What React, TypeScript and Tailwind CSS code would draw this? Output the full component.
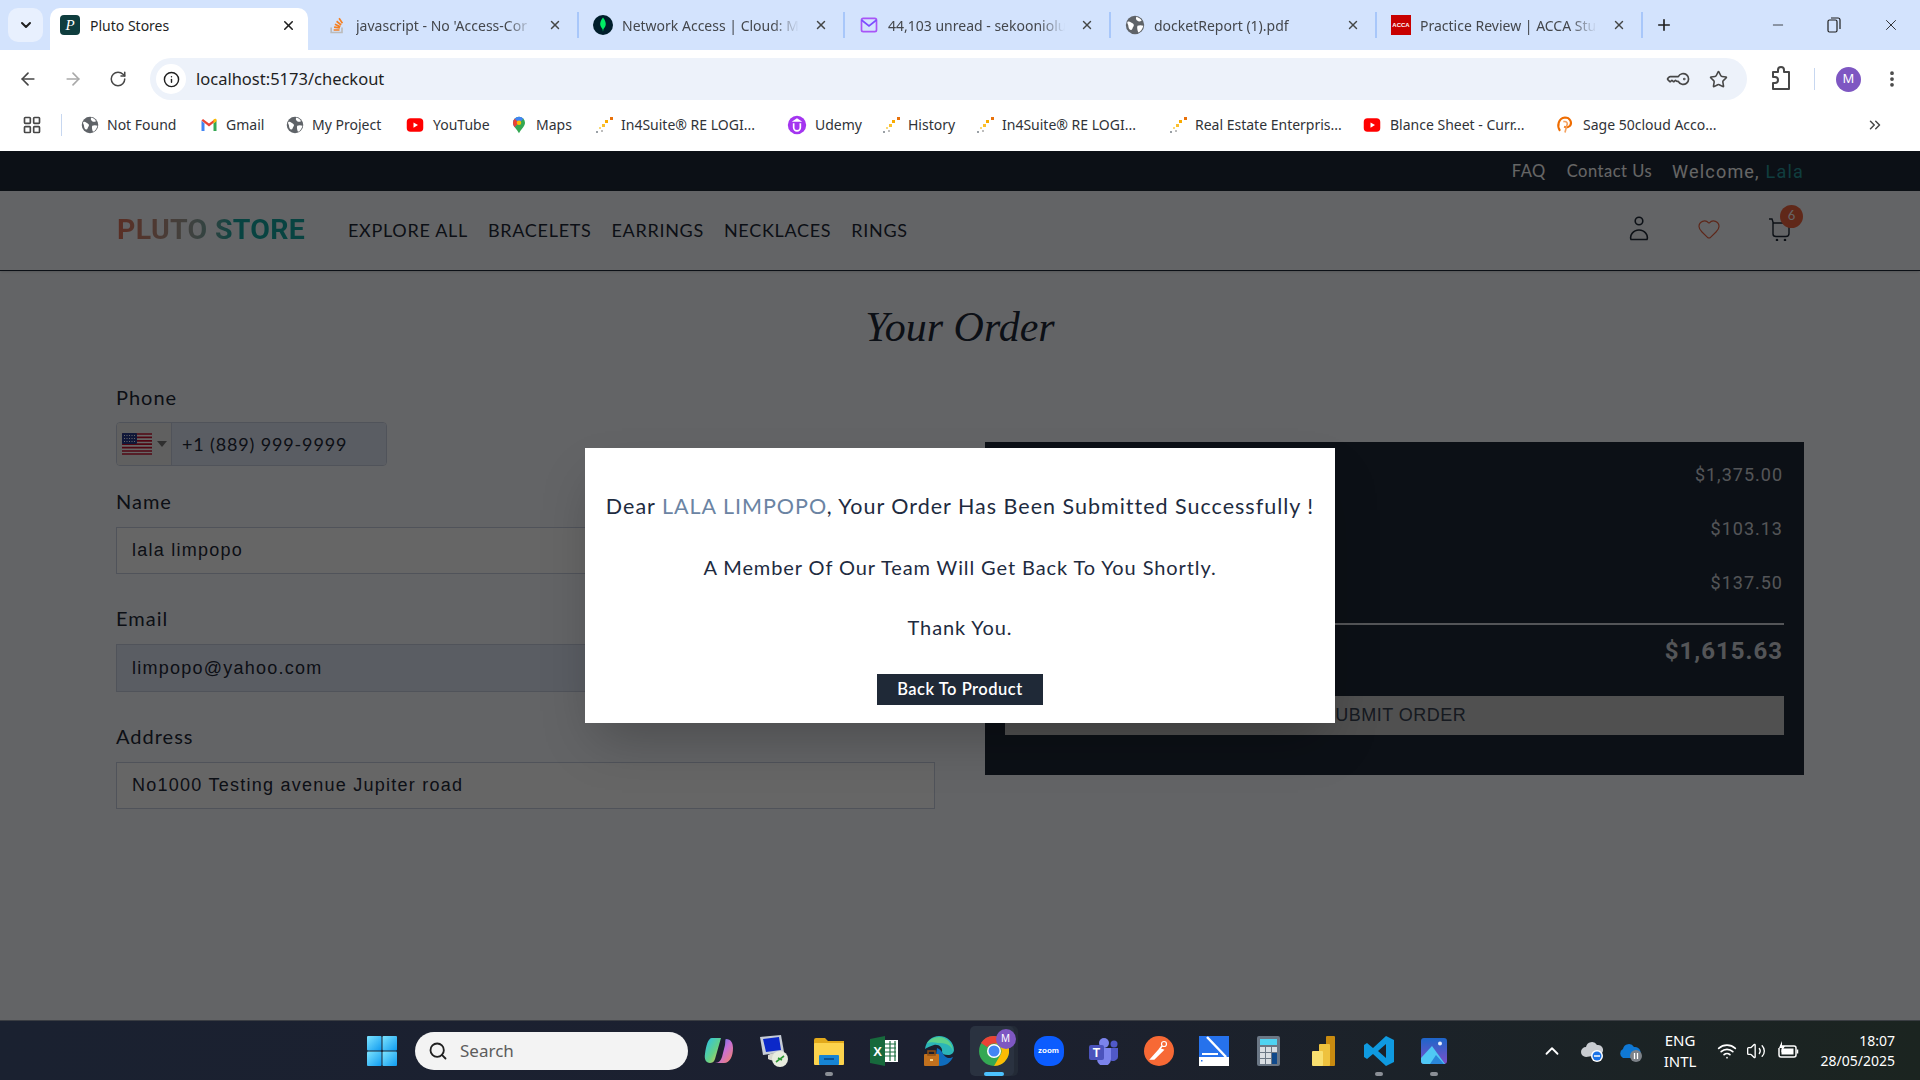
import { ArrowLeft, ArrowRight, RotateCw, Info, KeyRound, Star, EllipsisVertical, X, Plus, Minus, LayoutGrid, ChevronsRight, ChevronDown, Search, ChevronUp, Wifi, Volume2, Heart } from 'lucide-react';
import type { ReactNode } from 'react';

function GlobeIcon({ size = 18 }: { size?: number }) {
  return (
    <svg width={size} height={size} viewBox="0 0 24 24" className="shrink-0">
      <circle cx="12" cy="12" r="11" fill="#5f6368" />
      <path d="M3 8c3-1 4 1 6 2s2 3 1 4-1 4-3 4-3-3-3-5-2-3-1-5zM14 2c2 1 5 2 6 5-2 1-4 1-5 0s-3-3-1-5zM15 13c2-1 5-1 7 0-1 4-3 7-6 8-1-2-2-6-1-8z" fill="#fff" />
    </svg>
  );
}

function GmailIcon() {
  return (
    <svg width="18" height="18" viewBox="0 0 24 24" className="shrink-0">
      <path d="M2 6v14h4V10z" fill="#4285f4" />
      <path d="M22 6v14h-4V10z" fill="#34a853" />
      <path d="M2 6l10 8 10-8-2-2-8 6-8-6z" fill="#ea4335" />
      <path d="M18 4.500V10l4-3V5c0-1.500-2-2-4-.5z" fill="#fbbc04" />
    </svg>
  );
}

function YoutubeIcon() {
  return (
    <svg width="20" height="18" viewBox="0 0 24 24" className="shrink-0">
      <rect x="1" y="3" width="22" height="18" rx="5" fill="#f00" />
      <path d="M10 8.500l6 3.500-6 3.500z" fill="#fff" />
    </svg>
  );
}

function MapsIcon() {
  return (
    <svg width="18" height="20" viewBox="0 0 24 24" className="shrink-0">
      <path d="M12 1a8 8 0 0 1 8 8c0 5-5 8-8 14-3-6-8-9-8-14a8 8 0 0 1 8-8z" fill="#34a853" />
      <path d="M12 1a8 8 0 0 1 6 2.600L6 15c-1-2-2-4-2-6a8 8 0 0 1 8-8z" fill="#4285f4" />
      <path d="M6 3.500L12 9 6 15c-1-2-2-4-2-6s1-4 2-5.500z" fill="#ea4335" />
      <circle cx="12" cy="9" r="3" fill="#fbbc04" />
    </svg>
  );
}

function SparkIcon() {
  return (
    <svg width="18" height="18" viewBox="0 0 18 18" className="shrink-0">
      <rect x="15" y="1" width="3" height="3" fill="#e8710a" />
      <rect x="10" y="4" width="3" height="3" fill="#f9ab00" />
      <rect x="7" y="8" width="3" height="3" fill="#fbc02d" />
      <rect x="4" y="11" width="2" height="2" fill="#f9d976" />
      <rect x="1" y="15" width="2" height="2" fill="#9aa0a6" />
      <rect x="6" y="14" width="2" height="2" fill="#bdbdbd" />
    </svg>
  );
}

function UdemyIcon() {
  return (
    <svg width="20" height="20" viewBox="0 0 24 24" className="shrink-0">
      <circle cx="12" cy="12" r="11" fill="#a435f0" />
      <path d="M8 10v5a4 4 0 0 0 8 0v-5M12 5l-3 2h6z" fill="none" stroke="#fff" strokeWidth="2" />
    </svg>
  );
}

function SageIcon() {
  return (
    <svg width="20" height="22" viewBox="0 0 24 24" className="shrink-0" fill="none">
      <path d="M6 19C2 13 4 4 12 3c6 0 9 6 6 10-2 2-5 2-7 1" stroke="#ef6c00" strokeWidth="2.500" />
      <path d="M10 8c4-1 6 2 4 5l-2 8" stroke="#f4a261" strokeWidth="2" />
    </svg>
  );
}

function PlutoFavicon() {
  return (
    <div className="flex h-5 w-5 shrink-0 items-center justify-center rounded-sm bg-[#0f3d3e] font-['Liberation_Serif',serif] text-[15px] italic text-white">P</div>
  );
}

function StackIcon() {
  return (
    <svg width="20" height="20" viewBox="0 0 24 24" className="shrink-0" fill="none">
      <path d="M5 15v6h13v-6" stroke="#bcbbbb" strokeWidth="2" />
      <path d="M8 18h7M8.500 14.500l7 1M9.500 11l6.500 3M11.500 7.500l5.500 4.500M14.500 4l4 6" stroke="#f48024" strokeWidth="2" />
    </svg>
  );
}

function MongoIcon() {
  return (
    <svg width="20" height="20" viewBox="0 0 24 24" className="shrink-0">
      <circle cx="12" cy="12" r="12" fill="#001e2b" />
      <path d="M12 3c3 4 4 7 3 10-.5 2-2 3-2.500 4l-.5 3-.5-3C11 16 9.500 15 9 13c-1-3 0-6 3-10z" fill="#00ed64" />
    </svg>
  );
}

function MailIcon() {
  return (
    <svg width="20" height="20" viewBox="0 0 24 24" className="shrink-0" fill="none">
      <rect x="3" y="4" width="18" height="16" rx="2" stroke="#a855f7" strokeWidth="2" />
      <path d="M3 6l9 7 9-7" stroke="#7c4dff" strokeWidth="2" />
    </svg>
  );
}

function AccaIcon() {
  return (
    <div className="flex h-5 w-5 shrink-0 items-center justify-center bg-[#c80000] font-['Liberation_Sans',sans-serif] text-[6px] font-bold text-white">ACCA</div>
  );
}

function ExtensionsIcon() {
  return (
    <svg width="22" height="26" viewBox="0 0 22 26" fill="none" stroke="#474747" strokeWidth="2" className="ml-[23px] shrink-0">
      <path d="M3 6h5V4a3 3 0 0 1 6 0v2h5v17H3v-6h2a3 3 0 0 0 0-6H3z" strokeLinejoin="round" />
    </svg>
  );
}

function UsFlag() {
  return (
    <svg width="30" height="22" viewBox="0 0 30 22" className="shrink-0">
      <rect width="30" height="22" rx="2" fill="#fff" />
      <path d="M0 1h30M0 4.400h30M0 7.800h30M0 11.200h30M0 14.600h30M0 18h30M0 21h30" stroke="#c8102e" strokeWidth="1.700" />
      <rect width="15" height="11" rx="1" fill="#2a3a8c" />
      <path d="M2 2.500h11M2 5.500h11M2 8.500h11" stroke="#fff" strokeWidth="1" strokeDasharray="1 1.500" />
    </svg>
  );
}

function WindowsIcon() {
  return (
    <svg width="30" height="30" viewBox="0 0 30 30">
      <defs>
        <linearGradient id="win" x1="0" y1="0" x2="1" y2="1">
          <stop offset="0" stopColor="#7de4ff" />
          <stop offset="1" stopColor="#0f9bf0" />
        </linearGradient>
      </defs>
      <rect width="14.500" height="14.500" rx="1" fill="url(#win)" />
      <rect x="15.500" width="14.500" height="14.500" rx="1" fill="url(#win)" />
      <rect y="15.500" width="14.500" height="14.500" rx="1" fill="url(#win)" />
      <rect x="15.500" y="15.500" width="14.500" height="14.500" rx="1" fill="url(#win)" />
    </svg>
  );
}

function CopilotIcon() {
  return (
    <svg width="30" height="28" viewBox="0 0 30 28">
      <defs>
        <linearGradient id="copL" x1="0" y1="0" x2="1" y2="1">
          <stop offset="0" stopColor="#27c2ee" />
          <stop offset=".55" stopColor="#62d08a" />
          <stop offset="1" stopColor="#f5c842" />
        </linearGradient>
        <linearGradient id="copR" x1="0" y1="0" x2="1" y2="1">
          <stop offset="0" stopColor="#2b7bf0" />
          <stop offset=".5" stopColor="#c66fd9" />
          <stop offset="1" stopColor="#f7845f" />
        </linearGradient>
      </defs>
      <path d="M8 1h9l-6 21c-1 3-3 4-5 4-4 0-6-4-5-9C2 9 4 1 8 1z" fill="url(#copL)" />
      <path d="M22 2c5 0 7 4 7 9 0 8-3 15-9 15h-9c4 0 6-3 7-6l3-12c.5-3 0-6 1-6z" fill="url(#copR)" />
    </svg>
  );
}

function RemoteIcon() {
  return (
    <svg width="30" height="32" viewBox="0 0 30 32">
      <path d="M1 2l21-2 3 17-21 3z" fill="#c6ccd6" />
      <path d="M4 4l16-2 2 13-15 2z" fill="#0b28c9" />
      <path d="M9 20c4-2 10-3 16-2v6c-6 2-12 2-16 0z" fill="#d8d8d0" />
      <circle cx="21" cy="24" r="8" fill="#e8ecdf" />
      <path d="M17 27l4-3-2-1M25 21l-4 3 2 1" stroke="#2e9a35" strokeWidth="1.600" fill="none" />
    </svg>
  );
}

function ExplorerIcon() {
  return (
    <svg width="30" height="28" viewBox="0 0 30 28">
      <path d="M0 3a2 2 0 0 1 2-2h9l3 3h16v6H0z" fill="#e2a91b" />
      <rect y="6" width="30" height="22" rx="1" fill="#fcd34d" />
      <rect x="5" y="18" width="20" height="10" rx="1" fill="#1784d4" />
      <rect x="10" y="21" width="10" height="2" fill="#0b5394" />
    </svg>
  );
}

function ExcelIcon() {
  return (
    <svg width="28" height="30" viewBox="0 0 28 30">
      <rect x="12" y="4" width="16" height="22" fill="#fff" />
      <path d="M15 8h11M15 12h11M15 16h11M15 20h11M20 5v20M25 5v20" stroke="#1d6f42" strokeWidth="1.200" />
      <path d="M0 3L15 0v30L0 27z" fill="#17693c" />
      <text x="7.500" y="20" textAnchor="middle" fontSize="13" fontWeight="700" fill="#fff" fontFamily="Liberation Sans, sans-serif">X</text>
    </svg>
  );
}

function EdgeIcon() {
  return (
    <svg width="30" height="30" viewBox="0 0 30 30">
      <path d="M1 13C2 5 8 0 15 0c8 0 15 6 15 14 0 3-3 5-6 5-4 0-6-1-6-3 1-4-3-8-8-7-4 1-7 3-9 4z" fill="#2bb5b8" />
      <path d="M13 12c6 2 6 9 11 10 2 0 3 0 5-1-2 5-7 9-13 9-2 0-4-1-5-2z" fill="#0f6cbd" />
      <path d="M14 7c6 0 14 1 15 9 0-8-6-15-14-15-5 0-9 2-12 6 3-1 7-1 11 0z" fill="#5cd18c" />
      <rect y="18" width="15" height="12" rx="1" fill="#c2711e" />
      <rect x="4" y="15" width="7" height="4" fill="none" stroke="#8f4f14" strokeWidth="1.500" />
      <rect x="6" y="23" width="3" height="2" fill="#f7d38b" />
    </svg>
  );
}

function ChromeIcon() {
  return (
    <svg width="30" height="30" viewBox="0 0 30 30">
      <circle cx="15" cy="15" r="15" fill="#34a853" />
      <path d="M15 0a15 15 0 0 1 13 7.500H15a7.500 7.500 0 0 0-6.500 3.750L2 7A15 15 0 0 1 15 0z" fill="#ea4335" />
      <path d="M28 7.500A15 15 0 0 1 15 30l6.500-11.250A7.500 7.500 0 0 0 15 7.500z" fill="#fbbc04" />
      <circle cx="15" cy="15" r="7" fill="#fff" />
      <circle cx="15" cy="15" r="5.500" fill="#4285f4" />
    </svg>
  );
}

function ZoomIcon() {
  return (
    <div className="flex h-[30px] w-[30px] items-center justify-center rounded-[13px] bg-[#0b5cff] font-['Liberation_Sans',sans-serif] text-[8px] font-bold text-white">zoom</div>
  );
}

function TeamsIcon() {
  return (
    <svg width="30" height="28" viewBox="0 0 30 28">
      <circle cx="15" cy="6" r="5" fill="#7b83eb" />
      <circle cx="25" cy="7" r="3.500" fill="#5059c9" />
      <path d="M19 11h10v9a5 5 0 0 1-8 3z" fill="#5059c9" />
      <path d="M8 11h14v11a6 6 0 0 1-14 0z" fill="#7b83eb" />
      <rect y="8" width="15" height="15" rx="2" fill="#4b53bc" />
      <text x="7.500" y="20" textAnchor="middle" fontSize="12" fontWeight="700" fill="#fff" fontFamily="Liberation Sans, sans-serif">T</text>
    </svg>
  );
}

function PostmanIcon() {
  return (
    <svg width="30" height="30" viewBox="0 0 30 30">
      <circle cx="15" cy="15" r="15" fill="#f76935" />
      <circle cx="20" cy="8" r="2.500" fill="none" stroke="#fff" strokeWidth="1.200" />
      <path d="M7 23l9-10 3 1-9 9zM18 10l-3 4" stroke="#fff" strokeWidth="1.600" fill="#fff" />
    </svg>
  );
}

function ScannerIcon() {
  return (
    <svg width="30" height="30" viewBox="0 0 30 30">
      <rect width="30" height="30" fill="#2672ec" />
      <path d="M8 1l19 20" stroke="#fff" strokeWidth="2.500" />
      <rect x="3" y="17" width="16" height="2" fill="#fff" />
      <rect y="21" width="30" height="9" fill="#fff" />
      <rect x="2" y="24" width="1.500" height="1.500" fill="#2672ec" />
    </svg>
  );
}

function CalcIcon() {
  return (
    <svg width="23" height="30" viewBox="0 0 23 30">
      <rect width="23" height="30" rx="2" fill="#6b7785" />
      <rect x="3" y="3" width="17" height="6" fill="#4fd3f2" />
      <path d="M3 11h5v5H3zM9 11h5v5H9zM15 11h5v5h-5zM3 17h5v5H3zM9 17h5v5H9zM3 23h5v5H3zM9 23h5v5H9z" fill="#d9dee3" />
      <rect x="15" y="17" width="5" height="11" fill="#114a8b" />
    </svg>
  );
}

function PowerBiIcon() {
  return (
    <svg width="23" height="30" viewBox="0 0 23 30">
      <rect x="14" width="9" height="30" rx="1" fill="#c98b10" />
      <rect x="7" y="8" width="11" height="22" rx="1" fill="#eec23e" />
      <rect y="15" width="11" height="15" rx="1" fill="#f8df6f" />
    </svg>
  );
}

function VscodeIcon() {
  return (
    <svg width="30" height="30" viewBox="0 0 30 30">
      <path d="M22 0l8 4v22l-8 4-13-12-6 5-3-2V9l3-2 6 5zM22 8l-8 7 8 7z" fill="#0f9ae0" fillRule="evenodd" />
    </svg>
  );
}

function PhotosIcon() {
  return (
    <svg width="26" height="26" viewBox="0 0 26 26">
      <defs>
        <linearGradient id="ph" x1="0" y1="0" x2="0" y2="1">
          <stop offset="0" stopColor="#1d66c9" />
          <stop offset="1" stopColor="#7d4fc9" />
        </linearGradient>
      </defs>
      <rect width="26" height="26" rx="3" fill="url(#ph)" />
      <circle cx="19" cy="5.500" r="2" fill="#e8eefc" />
      <path d="M0 20L11 8l13 18H3a3 3 0 0 1-3-3z" fill="#4fc8f5" />
      <path d="M9 26l6-9 8 9z" fill="#2a86d9" />
    </svg>
  );
}

function CloudSyncIcon() {
  return (
    <svg width="24" height="24" viewBox="0 0 24 24">
      <path d="M6 18a5 5 0 0 1 0-10 6 6 0 0 1 11-2 5 5 0 0 1 2 10z" fill="#c9ccd1" />
      <circle cx="17" cy="17" r="6" fill="#fff" />
      <circle cx="17" cy="17" r="4.500" fill="#1a73e8" />
      <path d="M14 17h6" stroke="#fff" strokeWidth="1.500" />
    </svg>
  );
}

function OneDriveIcon() {
  return (
    <svg width="24" height="24" viewBox="0 0 24 24">
      <path d="M4 19a5 5 0 0 1 0-9 6 6 0 0 1 11-2 5 5 0 0 1 2 11z" fill="#0f78d4" />
      <circle cx="17" cy="17" r="6" fill="#7d8288" />
      <path d="M15.500 14v6M18.500 14v6" stroke="#fff" strokeWidth="1.300" />
    </svg>
  );
}

function BatteryIcon() {
  return (
    <svg width="24" height="24" viewBox="0 0 24 24" fill="none">
      <path d="M5 7h14a2 2 0 0 1 2 2v7a2 2 0 0 1-2 2H6a2 2 0 0 1-2-2V9" stroke="#fff" strokeWidth="1.500" />
      <rect x="6.500" y="9.500" width="12" height="6" fill="#fff" />
      <path d="M22.500 10.500v4" stroke="#fff" strokeWidth="1.500" />
      <path d="M7 2L4 9h3l-1 5 4-7H7z" fill="#fff" />
    </svg>
  );
}

function UserIcon() {
  return (
    <svg width="20" height="25" viewBox="0 0 20 25" fill="none" stroke="#1f2937" strokeWidth="1.600">
      <circle cx="10" cy="5" r="3.800" />
      <path d="M2 23.500c-1.500-4 2-9.500 8-9.500s9.500 5.500 8 9.500z" strokeLinejoin="round" />
    </svg>
  );
}

function CartIcon() {
  return (
    <svg width="24" height="24" viewBox="0 0 24 24" fill="none" stroke="#1f2937" strokeWidth="1.400">
      <path d="M1 2h3l1 3v12c0 2 1 2.500 3 2.500h10c2 0 3-1 3-3V6H5" />
      <circle cx="9" cy="23" r=".6" fill="#1f2937" />
      <circle cx="17" cy="23" r=".6" fill="#1f2937" />
    </svg>
  );
}

const tabs: { icon: ReactNode; title: string }[] = [
  { icon: <StackIcon />, title: "javascript - No 'Access-Cor" },
  { icon: <MongoIcon />, title: 'Network Access | Cloud: M' },
  { icon: <MailIcon />, title: '44,103 unread - sekooniolu' },
  { icon: <GlobeIcon size={20} />, title: 'docketReport (1).pdf' },
  { icon: <AccaIcon />, title: 'Practice Review | ACCA Stu' },
];

const bookmarks: { icon: ReactNode; label: string; width: string }[] = [
  { icon: <GlobeIcon />, label: 'Not Found', width: 'w-[119px]' },
  { icon: <GmailIcon />, label: 'Gmail', width: 'w-[86px]' },
  { icon: <GlobeIcon />, label: 'My Project', width: 'w-[119px]' },
  { icon: <YoutubeIcon />, label: 'YouTube', width: 'w-[105px]' },
  { icon: <MapsIcon />, label: 'Maps', width: 'w-[85px]' },
  { icon: <SparkIcon />, label: 'In4Suite® RE LOGI...', width: 'w-[192px]' },
  { icon: <UdemyIcon />, label: 'Udemy', width: 'w-[95px]' },
  { icon: <SparkIcon />, label: 'History', width: 'w-[94px]' },
  { icon: <SparkIcon />, label: 'In4Suite® RE LOGI...', width: 'w-[193px]' },
  { icon: <SparkIcon />, label: 'Real Estate Enterpris...', width: 'w-[193px]' },
  { icon: <YoutubeIcon />, label: 'Blance Sheet - Curr...', width: 'w-[193px]' },
  { icon: <SageIcon />, label: 'Sage 50cloud Acco...', width: 'w-[190px]' },
];

const navLinks = ['EXPLORE ALL', 'BRACELETS', 'EARRINGS', 'NECKLACES', 'RINGS'];

const dockItems: { icon: ReactNode; open?: boolean; active?: boolean }[] = [
  { icon: <CopilotIcon /> },
  { icon: <RemoteIcon /> },
  { icon: <ExplorerIcon />, open: true },
  { icon: <ExcelIcon /> },
  { icon: <EdgeIcon /> },
  { icon: <ChromeIcon />, active: true },
  { icon: <ZoomIcon /> },
  { icon: <TeamsIcon /> },
  { icon: <PostmanIcon /> },
  { icon: <ScannerIcon /> },
  { icon: <CalcIcon /> },
  { icon: <PowerBiIcon /> },
  { icon: <VscodeIcon />, open: true },
  { icon: <PhotosIcon />, open: true },
];

function BrowserChrome() {
  return (
    <div className="shrink-0 font-['Noto_Sans',sans-serif]">
      {/* Tab strip */}
      <div className="flex h-[50px] items-end bg-[#d3e3fd] pl-2">
        <div className="mb-2 flex h-[34px] w-[35px] items-center justify-center rounded-[10px] bg-[#e8f0fe]">
          <ChevronDown size={16} strokeWidth={3} className="text-[#1f1f1f]" />
        </div>
        <div className="ml-[7px] flex h-[42px] w-[258px] items-center rounded-t-[10px] bg-white pb-[8px] pl-[10px]">
          <PlutoFavicon />
          <span className="ml-[10px] text-[14px] text-[#1f1f1f]">Pluto Stores</span>
          <X size={15} strokeWidth={2.5} className="ml-auto mr-[12px] text-[#1f1f1f]" />
        </div>
        <div className="ml-[5px] flex h-[42px]">
          {tabs.map((tab) => (
            <div key={tab.title} className="flex h-[42px] w-[266px] items-center pb-[8px] pl-[14px]">
              {tab.icon}
              <span className="ml-[9px] w-[177px] overflow-hidden whitespace-nowrap text-[14px] text-[#44474c] [mask-image:linear-gradient(to_right,black_85%,transparent)]">
                {tab.title}
              </span>
              <X size={14} strokeWidth={2.5} className="ml-[15px] text-[#444746]" />
              <div className="ml-auto h-[26px] w-[2px] bg-[#a8c7fa]" />
            </div>
          ))}
        </div>
        <div className="mb-[16px] ml-[12px] flex items-center">
          <Plus size={18} strokeWidth={2.2} className="text-[#1f1f1f]" />
        </div>
        <div className="mb-[16px] ml-auto flex items-center pr-[20px] text-[#1f1f1f]">
          <Minus size={16} strokeWidth={1.2} />
          <svg width="14" height="16" viewBox="0 0 14 16" fill="none" stroke="#1f1f1f" strokeWidth="1.200" className="ml-[41px]">
            <rect x="1" y="3" width="9" height="12" rx="1.500" />
            <path d="M4 1h7a2 2 0 0 1 2 2v9" />
          </svg>
          <X size={18} strokeWidth={1.2} className="ml-[41px]" />
        </div>
      </div>

      {/* Toolbar */}
      <div className="flex h-[51px] items-center bg-white pt-[7px] text-[#474747]">
        <ArrowLeft size={20} strokeWidth={2} className="ml-[18px]" />
        <ArrowRight size={20} strokeWidth={2} className="ml-[25px] text-[#a9a9a9]" />
        <RotateCw size={18} strokeWidth={2} className="ml-[26px]" />
        <div className="ml-[23px] flex h-[42px] w-[1597px] items-center rounded-full bg-[#edf2fa] pl-[6px] pr-[19px]">
          <div className="flex h-[30px] w-[30px] items-center justify-center rounded-full bg-white">
            <Info size={17} strokeWidth={2} className="text-[#1f1f1f]" />
          </div>
          <span className="ml-[10px] text-[16.500px] text-[#1f1f1f]">localhost:5173/checkout</span>
          <KeyRound size={20} strokeWidth={2} className="ml-auto rotate-45" />
          <Star size={19} strokeWidth={2} className="ml-[20px]" />
        </div>
        <ExtensionsIcon />
        <div className="ml-[22px] h-[22px] w-[1px] bg-[#c7d7f0]" />
        <div className="ml-[21px] flex h-[25px] w-[25px] items-center justify-center rounded-full bg-[#7e57c2] text-[13px] text-white">M</div>
        <EllipsisVertical size={20} strokeWidth={2.5} className="ml-[21px]" />
      </div>

      {/* Bookmarks */}
      <div className="flex h-[50px] items-center bg-white pb-[3px] text-[#474747]">
        <LayoutGrid size={20} strokeWidth={2} className="ml-[22px]" />
        <div className="ml-[19px] h-[22px] w-[1px] bg-[#c7d7f0]" />
        <div className="ml-[19px] flex">
          {bookmarks.map((item, i) => (
            <div key={i} className={`${item.width} flex items-center gap-[8px] whitespace-nowrap text-[14px] text-[#303338]`}>
              {item.icon}
              <span>{item.label}</span>
            </div>
          ))}
        </div>
        <ChevronsRight size={18} strokeWidth={2} className="ml-[121px]" />
      </div>
    </div>
  );
}

function Field({ label, value, autofill, heights }: { label: string; value: string; autofill?: boolean; heights: string }) {
  return (
    <div>
      <div className="h-[26px] text-[20px] leading-[26px] tracking-[1px] text-[#1f2937]">{label}</div>
      <div className={`${heights} ${autofill ? 'bg-[#e2e8f8]' : 'bg-white'} mt-[13px] flex items-center border border-[#c8d0e0] pl-[15px] font-['Liberation_Sans',sans-serif] text-[18px] tracking-[1.250px] text-[#1f2937]`}>
        {value}
      </div>
    </div>
  );
}

function StorePage() {
  return (
    <div className="relative flex min-h-0 flex-1 flex-col overflow-hidden bg-[#f8fbff] font-['Lato',sans-serif]">
      {/* Top bar */}
      <div className="flex h-[40px] shrink-0 items-center justify-end bg-[#1f2937] pr-[116px] text-[16.500px] text-white">
        <span className="tracking-[0.5px]">FAQ</span>
        <span className="ml-[21px] tracking-[0.5px]">Contact Us</span>
        <span className="ml-[20px] font-['Roboto',sans-serif] text-[18px] tracking-[1.200px]">
          Welcome, <span className="text-[#2a9a9d]">Lala</span>
        </span>
      </div>

      {/* Nav */}
      <div className="flex h-[80px] shrink-0 items-center border-b border-[#1f2937] pl-[117px] pr-[127px] shadow-sm">
        <div className="w-[231px] bg-gradient-to-r from-[#e07258] from-[0%] via-[#9aa5a0] via-[33%] to-[#14a8a2] to-[50%] bg-clip-text font-['Roboto',sans-serif] text-[28.500px] font-bold tracking-[0.300px] text-transparent">
          PLUTO STORE
        </div>
        <div className="flex gap-[20px] text-[18px] tracking-[0.700px] text-[#1f2937]">
          {navLinks.map((link) => (
            <span key={link}>{link}</span>
          ))}
        </div>
        <div className="ml-auto mb-[4px] flex items-center">
          <UserIcon />
          <Heart size={24} strokeWidth={1.2} className="ml-[48px] text-[#e8603f]" />
          <div className="relative ml-[47px] mr-[1px]">
            <CartIcon />
            <div className="absolute -right-[11px] -top-[12px] flex h-[23px] w-[23px] items-center justify-center rounded-full bg-[#f0643f] text-[13px] text-white">6</div>
          </div>
        </div>
      </div>

      {/* Checkout */}
      <div className="px-[116px]">
        <h1 className="mt-[32px] h-[48px] text-center font-['Liberation_Serif',serif] text-[42px] italic leading-[48px] text-[#1f2937]">Your Order</h1>
        <div className="mt-[33px] flex gap-[50px]">
          <div className="w-[819px]">
            <div className="h-[26px] text-[20px] leading-[26px] tracking-[1px] text-[#1f2937]">Phone</div>
            <div className="mt-[12px] flex h-[44px] w-[271px] overflow-hidden rounded-[4px] border border-[#c8d0e0]">
              <div className="flex w-[55px] items-center gap-[5px] border-r border-[#c8d0e0] bg-[#f0f0f0] pl-[5px]">
                <UsFlag />
                <div className="h-0 w-0 border-x-[5px] border-t-[6px] border-x-transparent border-t-[#777]" />
              </div>
              <div className="flex flex-1 items-center bg-[#e2e8f8] pl-[10px] text-[18px] tracking-[0.850px] text-[#1f2937]">+1 (889) 999-9999</div>
            </div>
            <div className="mt-[22px] flex flex-col gap-[31px]">
              <Field label="Name" value="lala limpopo" heights="h-[47px]" />
              <Field label="Email" value="limpopo@yahoo.com" autofill heights="h-[48px]" />
              <Field label="Address" value="No1000 Testing avenue Jupiter road" heights="h-[47px]" />
            </div>
          </div>

          <div className="mt-[58px] h-fit w-[819px] bg-[#1f2937] px-[20px] pb-[40px] pt-[6px] font-['Roboto',sans-serif] text-[#d1d5db]">
            <div className="flex h-[53px] items-center justify-end pr-[1px] text-[18px] tracking-[1px]">$1,375.00</div>
            <div className="flex h-[54px] items-center justify-end pr-[1px] text-[18px] tracking-[1px]">$103.13</div>
            <div className="flex h-[54px] items-center justify-end pr-[1px] text-[18px] tracking-[1px]">$137.50</div>
            <div className="mt-[14px] h-[2px] bg-[#d1d5db]" />
            <div className="flex h-[50px] items-center justify-end pr-[1px] pt-[1px] text-[24px] font-bold tracking-[1px]">$1,615.63</div>
            <button className="mt-[21px] block h-[39px] w-full bg-[#c8c8c8] font-['Liberation_Sans',sans-serif] text-[18px] tracking-[0.500px] text-[#374151]">SUBMIT ORDER</button>
          </div>
        </div>
      </div>

      {/* Dim layer and confirmation */}
      <div className="absolute inset-0 flex items-center justify-center bg-black/60">
        <div className="flex h-[275px] w-[750px] flex-col items-center bg-white pt-[42px] text-[#1e2b3f] shadow-2xl">
          <p className="text-[21.500px] leading-[32px] tracking-[1px]">
            Dear <span className="text-[#6b84a3]">LALA LIMPOPO</span>, Your Order Has Been Submitted Successfully !
          </p>
          <p className="mt-[29px] text-[20px] leading-[32px] tracking-[0.900px]">A Member Of Our Team Will Get Back To You Shortly.</p>
          <p className="mt-[28px] text-[20px] leading-[32px] tracking-[0.900px]">Thank You.</p>
          <button className="mt-[31px] h-[31px] w-[166px] bg-[#1f2937] text-[16.500px] font-semibold tracking-[0.500px] text-white">Back To Product</button>
        </div>
      </div>
    </div>
  );
}

function Taskbar() {
  return (
    <div className="flex h-[60px] shrink-0 items-center border-t border-[#3a3d42] bg-gradient-to-r from-[#1a2130] via-[#1c2030] to-[#1b2420] pl-[367px] font-['Noto_Sans',sans-serif] text-white">
      <WindowsIcon />
      <div className="ml-[18px] flex h-[38px] w-[273px] items-center rounded-full bg-[#f3f3f3] pl-[13px] text-[#5c5c5c]">
        <Search size={20} strokeWidth={2.2} className="text-[#1f1f1f]" />
        <span className="ml-[12px] text-[17px]">Search</span>
      </div>
      <div className="ml-[3px] flex">
        {dockItems.map((item, i) => (
          <div key={i} className="relative flex h-[50px] w-[55px] items-center justify-center">
            {item.active && <div className="absolute inset-y-0 left-[8px] w-[44px] rounded-[5px] bg-[#232a36]" />}
            {item.active && <div className="absolute inset-y-0 left-[4px] w-[44px] rounded-[5px] bg-[#2a3240]" />}
            <div className="relative">
              {item.icon}
              {item.active && (
                <div className="absolute -right-[7px] -top-[7px] flex h-5 w-5 items-center justify-center rounded-full bg-[#7e57c2] text-[10px]">M</div>
              )}
            </div>
            {item.open && <div className="absolute bottom-0 h-[4px] w-[8px] rounded-full bg-[#8b8f96]" />}
            {item.active && <div className="absolute bottom-0 h-[4px] w-[20px] rounded-full bg-[#4cc2ff]" />}
          </div>
        ))}
      </div>
      <ChevronUp size={22} strokeWidth={2} className="ml-[80px]" />
      <div className="ml-[17px]"><CloudSyncIcon /></div>
      <div className="ml-[15px]"><OneDriveIcon /></div>
      <div className="ml-[15px] w-[44px] text-center text-[15px] leading-[21px]">
        <div>ENG</div>
        <div>INTL</div>
      </div>
      <Wifi size={20} strokeWidth={2} className="ml-[15px]" />
      <Volume2 size={20} strokeWidth={1.6} className="ml-[9px]" />
      <div className="ml-[9px]"><BatteryIcon /></div>
      <div className="ml-auto pr-[25px] text-right text-[14px] leading-[20px]">
        <div>18:07</div>
        <div>28/05/2025</div>
      </div>
    </div>
  );
}

export default function App() {
  return (
    <div className="flex h-screen w-full flex-col overflow-hidden">
      <BrowserChrome />
      <StorePage />
      <Taskbar />
    </div>
  );
}
